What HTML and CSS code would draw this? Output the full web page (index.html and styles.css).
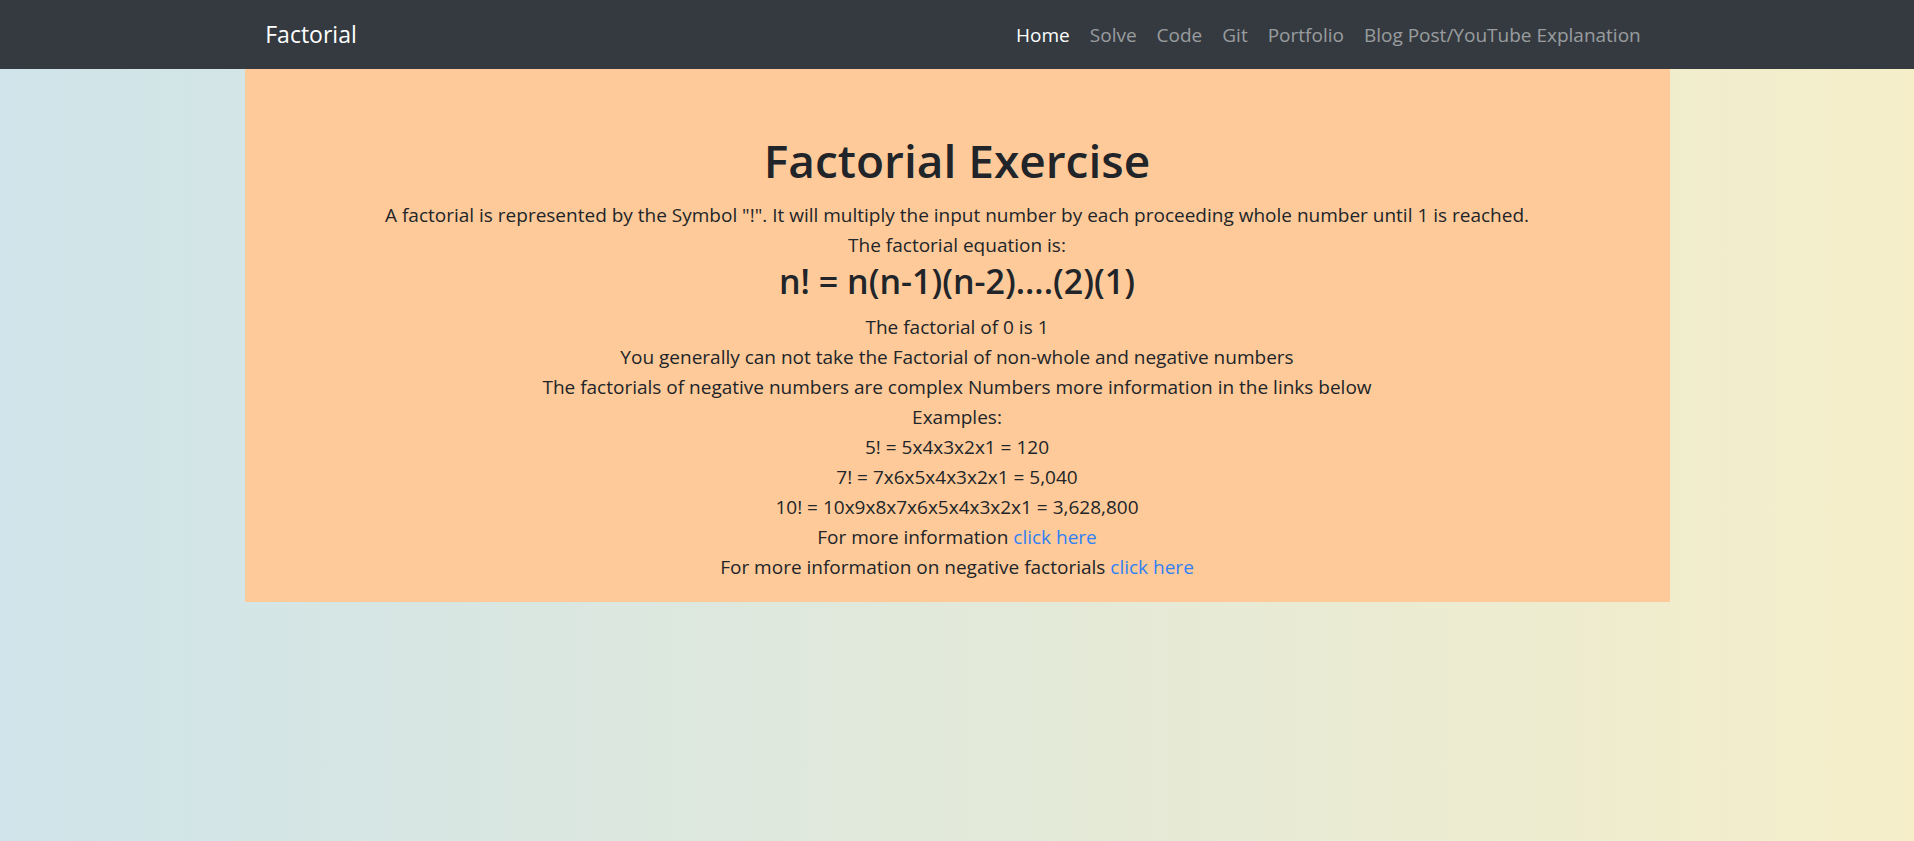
FILE: index.html
```html
<!DOCTYPE html>
<html lang="en">
<head>
<meta charset="utf-8">
<title>Factorial</title>
<link rel="stylesheet" href="styles.css">
</head>
<body>
<nav class="navbar">
  <div class="container nav-inner">
    <a class="brand" href="#">Factorial</a>
    <ul class="nav-links">
      <li><a class="nav-link active" href="#">Home</a></li>
      <li><a class="nav-link" href="#">Solve</a></li>
      <li><a class="nav-link" href="#">Code</a></li>
      <li><a class="nav-link" href="#">Git</a></li>
      <li><a class="nav-link" href="#">Portfolio</a></li>
      <li><a class="nav-link" href="#">Blog Post/YouTube Explanation</a></li>
    </ul>
  </div>
</nav>
<main class="container content">
  <h1 class="title">Factorial Exercise</h1>
  <div class="line">A factorial is represented by the Symbol "!". It will multiply the input number by each proceeding whole number until 1 is reached.</div>
  <div class="line">The factorial equation is:</div>
  <h3 class="equation">n! = n(n-1)(n-2)....(2)(1)</h3>
  <div class="line">The factorial of 0 is 1</div>
  <div class="line">You generally can not take the Factorial of non-whole and negative numbers</div>
  <div class="line">The factorials of negative numbers are complex Numbers more information in the links below</div>
  <div class="line">Examples:</div>
  <div class="line">5! = 5x4x3x2x1 = 120</div>
  <div class="line">7! = 7x6x5x4x3x2x1 = 5,040</div>
  <div class="line">10! = 10x9x8x7x6x5x4x3x2x1 = 3,628,800</div>
  <div class="line">For more information <a class="link" href="#">click here</a></div>
  <div class="line">For more information on negative factorials <a class="link" href="#">click here</a></div>
</main>
</body>
</html>
```

FILE: styles.css
```css
* { box-sizing: border-box; }
html, body { height: 100%; }
body {
  margin: 0;
  font-family: "Open Sans", "Noto Sans", sans-serif;
  font-size: 19px;
  line-height: 30px;
  color: #212529;
  background: linear-gradient(to right, #cfe4ea, #f5eec9);
  min-height: 841px;
}
.container {
  width: 1425px;
  margin: 0 auto;
  padding: 0 18.75px;
}
.navbar {
  background: #343a40;
  height: 69px;
}
.nav-inner {
  height: 100%;
  display: flex;
  align-items: center;
  justify-content: space-between;
}
.brand {
  color: #fff;
  font-size: 23px;
  text-decoration: none;
  line-height: 37px;
  padding-left: 2px;
}
.nav-links {
  display: flex;
  list-style: none;
  margin: 0;
  padding: 0;
}
.nav-link {
  display: block;
  padding: 10px 10px;
  color: rgba(255,255,255,0.5);
  text-decoration: none;
}
.nav-link.active { color: #fff; }
.content {
  background: #ffca99;
  text-align: center;
  padding-top: 61px;
  padding-bottom: 20px;
}
.title {
  font-size: 46px;
  font-weight: 600;
  line-height: 60px;
  margin: 0 0 10px;
}
.equation {
  font-size: 34px;
  font-weight: 600;
  line-height: 42px;
  margin: 0 0 10px;
}
.link {
  color: #2f80f5;
  text-decoration: none;
}
```
